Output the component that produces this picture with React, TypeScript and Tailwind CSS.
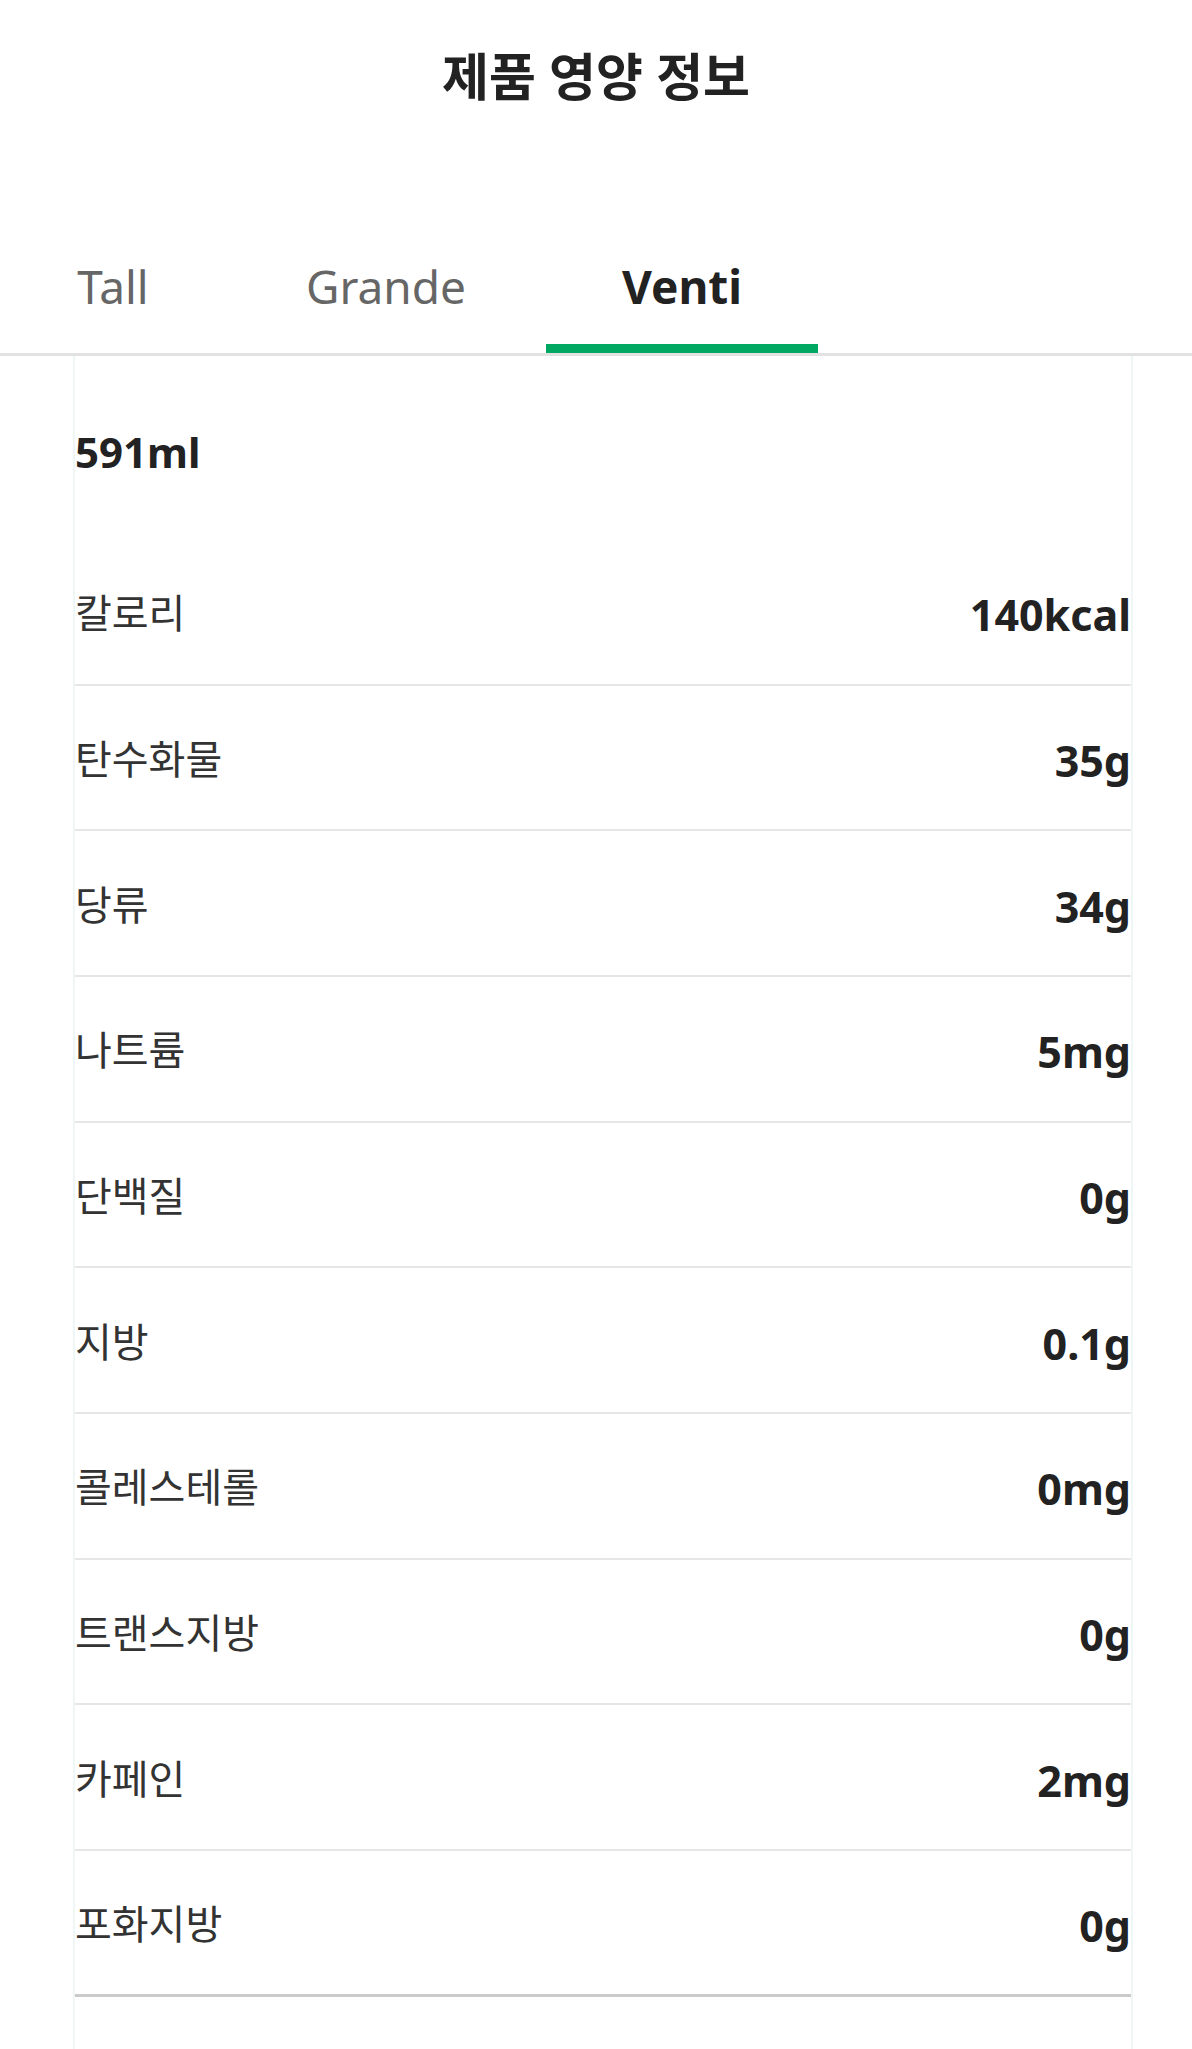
import React from "react";

const rows: [string, string][] = [
  ["칼로리", "140kcal"],
  ["탄수화물", "35g"],
  ["당류", "34g"],
  ["나트륨", "5mg"],
  ["단백질", "0g"],
  ["지방", "0.1g"],
  ["콜레스테롤", "0mg"],
  ["트랜스지방", "0g"],
  ["카페인", "2mg"],
  ["포화지방", "0g"],
];

const font = { fontFamily: '"Noto Sans", "Noto Sans CJK KR", sans-serif' };

export default function App() {
  return (
    <div className="w-[1192px] min-h-[2049px] bg-white flex flex-col" style={font}>
      <div className="pt-[46px] h-[256px]">
        <h1 className="text-center text-[51px] leading-[60px] font-bold text-[#222]">제품 영양 정보</h1>
      </div>
      <div className="flex border-b-[3px] border-[#e2e2e2] h-[100px]">
        <div className="w-[226px] flex flex-col items-center">
          <span className="text-[46px] leading-[60px] text-[#666]">Tall</span>
        </div>
        <div className="w-[320px] flex flex-col items-center">
          <span className="text-[46px] leading-[60px] text-[#666]">Grande</span>
        </div>
        <div className="w-[272px] flex flex-col items-center justify-between">
          <span className="text-[46px] leading-[60px] font-bold text-[#222]">Venti</span>
          <div className="w-full h-[9px] bg-[#00a862]" />
        </div>
      </div>
      <div className="ml-[73px] w-[1060px] flex-1 border-x-2 border-[#eef7f5] flex flex-col">
        <div className="h-[184px] pt-[66px]">
          <span className="text-[42px] leading-[60px] font-bold text-[#222]">591ml</span>
        </div>
        {rows.map(([label, value], i) => (
          <div
            key={label}
            className={
              i === rows.length - 1
                ? "h-[145.67px] flex items-center justify-between border-b-[3px] border-[#cacaca]"
                : "h-[145.67px] flex items-center justify-between border-b-2 border-[#e6e6e6]"
            }
          >
            <span className="text-[40px] leading-[50px] text-[#333] pt-[3px]">{label}</span>
            <span className="text-[43px] leading-[50px] font-bold text-[#222] pt-[7px]">{value}</span>
          </div>
        ))}
      </div>
    </div>
  );
}
